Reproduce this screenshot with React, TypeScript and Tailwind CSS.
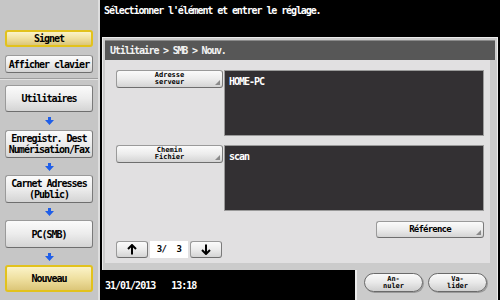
const mono = "font-['DejaVu_Sans_Mono',monospace]";

function GrayBtn({ children, className = "" }: { children: React.ReactNode; className?: string }) {
  return (
    <div
      className={`flex items-center justify-center rounded-[3px] border border-[#9a9a9a] border-b-[#6e6e6e] border-r-[#7a7a7a] bg-linear-to-b from-[#fbfbfb] via-[#ececec] to-[#d4d4d4] text-black ${className}`}
    >
      {children}
    </div>
  );
}

function Corner() {
  return (
    <svg className="absolute right-[2px] bottom-[2px]" width="5" height="5" viewBox="0 0 5 5">
      <polygon points="5,0 5,5 0,5" fill="#8a8a8a" />
    </svg>
  );
}

function BlueArrow() {
  return (
    <div className="flex items-center justify-center flex-1">
      <svg width="9" height="8" viewBox="0 0 9 8">
        <polygon points="3,0 6,0 6,3 9,3 4.5,8 0,3 3,3" fill="#1f5ee8" />
      </svg>
    </div>
  );
}

function SideBtn({ children, yellow = false, h }: { children: React.ReactNode; yellow?: boolean; h: string }) {
  if (yellow) {
    return (
      <div
        className={`${h} flex items-center justify-center rounded-[3px] border-2 border-[#e2c21c] bg-linear-to-b from-[#fbf3c8] via-[#efe0a0] to-[#dcc678] text-[10px] font-bold tracking-[-1px] text-black`}
      >
        {children}
      </div>
    );
  }
  return (
    <GrayBtn className={`${h} text-[10px] font-bold tracking-[-1px] leading-[11px] text-center`}>{children}</GrayBtn>
  );
}

function Pill({ a, b }: { a: string; b: string }) {
  return (
    <div className="flex h-[19px] w-[59px] flex-col items-center justify-center rounded-full border border-[#6a6a6a] bg-linear-to-b from-[#fafafa] via-[#e9e9e9] to-[#cfcfcf] text-[7px] font-bold leading-[7px] text-black shadow-[1px_1px_0_#9a9a9a]">
      <span>{a}</span>
      <span>{b}</span>
    </div>
  );
}

export default function App() {
  return (
    <div className={`flex h-[300px] w-[500px] overflow-hidden bg-black ${mono}`}>
      <aside className="flex w-[100px] flex-col border-r-2 border-[#dedede] bg-[#c6c6c6] pt-[30px]">
        <div className="px-[5px]">
          <SideBtn yellow h="h-[17px]">Signet</SideBtn>
          <div className="mt-[8px]">
            <SideBtn h="h-[18px]">Afficher clavier</SideBtn>
          </div>
        </div>
        <div className="mt-[5px] h-[2px] border-t border-[#9e9e9e] bg-[#e2e2e2]" />
        <div className="flex flex-col px-[5px] pt-[5px]">
          <SideBtn h="h-[27px]">Utilitaires</SideBtn>
          <div className="flex h-[18px]"><BlueArrow /></div>
          <SideBtn h="h-[28px]">
            <span>Enregistr. Dest<br />Numérisation/Fax</span>
          </SideBtn>
          <div className="flex h-[17px]"><BlueArrow /></div>
          <SideBtn h="h-[28px]">
            <span>Carnet Adresses<br />(Public)</span>
          </SideBtn>
          <div className="flex h-[17px]"><BlueArrow /></div>
          <SideBtn h="h-[28px]">PC(SMB)</SideBtn>
          <div className="flex h-[17px]"><BlueArrow /></div>
          <SideBtn yellow h="h-[27px]">Nouveau</SideBtn>
        </div>
      </aside>

      <main className="flex flex-1 flex-col">
        <div className="h-[37px] pl-[4px] pt-[3px] text-[10px] font-bold tracking-[-1.1px] text-white">
          Sélectionner l'élément et entrer le réglage.
        </div>

        <div className="mx-[2px] flex h-[233px] flex-col border-x border-t border-[#ececec] bg-[#cbcbcb] px-[2px] pt-[2px] pb-[7px]">
          <div className="flex h-[20px] items-center border-t border-[#8a8a8a] bg-[#575757] pl-[5px] text-[10px] font-bold tracking-[-1.2px] text-[#f2f2f2]">
            Utilitaire &gt; SMB &gt; Nouv.
          </div>
          <div className="mr-[5px] flex flex-1 flex-col bg-[#e1e0e1] pt-[10px] pb-[5px] pl-[11px] pr-[6px]">
            <div className="flex">
              <GrayBtn className="relative h-[18px] w-[107px] flex-col text-[7px] font-bold leading-[7px]">
                <span>Adresse</span>
                <span>serveur</span>
                <Corner />
              </GrayBtn>
              <div className="ml-[1px] h-[66px] flex-1 border border-[#9a9a9a] bg-[#333033] pl-[4px] pt-[3px] text-[10px] font-bold tracking-[-1px] text-white">
                HOME-PC
              </div>
            </div>
            <div className="mt-[9px] flex">
              <GrayBtn className="relative h-[18px] w-[107px] flex-col text-[7px] font-bold leading-[7px]">
                <span>Chemin</span>
                <span>Fichier</span>
                <Corner />
              </GrayBtn>
              <div className="ml-[1px] h-[66px] flex-1 border border-[#9a9a9a] bg-[#333033] pl-[4px] pt-[3px] text-[10px] font-bold tracking-[-1px] text-white">
                scan
              </div>
            </div>
            <div className="mt-[10px] flex justify-end">
              <GrayBtn className="relative h-[17px] w-[108px] text-[9px] font-bold tracking-[-0.8px]">
                Référence
                <Corner />
              </GrayBtn>
            </div>
            <div className="mt-[3px] flex items-center">
              <GrayBtn className="h-[17px] w-[32px]">
                <svg width="10" height="11" viewBox="0 0 10 11">
                  <path d="M5 1 L5 10.5 M1 5 L5 1 L9 5" stroke="#000" strokeWidth="2" fill="none" />
                </svg>
              </GrayBtn>
              <div className="mx-[2px] flex h-[17px] w-[38px] items-center justify-center bg-white text-[9px] font-bold tracking-[-0.5px] text-black">
                3/&nbsp;&nbsp;3
              </div>
              <GrayBtn className="h-[17px] w-[32px]">
                <svg width="10" height="11" viewBox="0 0 10 11">
                  <path d="M5 0.5 L5 10 M1 6 L5 10 L9 6" stroke="#000" strokeWidth="2" fill="none" />
                </svg>
              </GrayBtn>
            </div>
          </div>
        </div>

        <div className="flex h-[30px]">
          <div className="flex w-[255px] items-center gap-[16px] pl-[5px] text-[10px] font-bold tracking-[-1px] text-white">
            <span>31/01/2013</span>
            <span>13:18</span>
          </div>
          <div className="mr-[2px] flex flex-1 items-start gap-[5px] border-l-2 border-r border-[#ececec] bg-[#cbcbcb] pl-[7px] pt-[3px]">
            <Pill a="An-" b="nuler" />
            <Pill a="Va-" b="lider" />
          </div>
        </div>
      </main>
    </div>
  );
}
